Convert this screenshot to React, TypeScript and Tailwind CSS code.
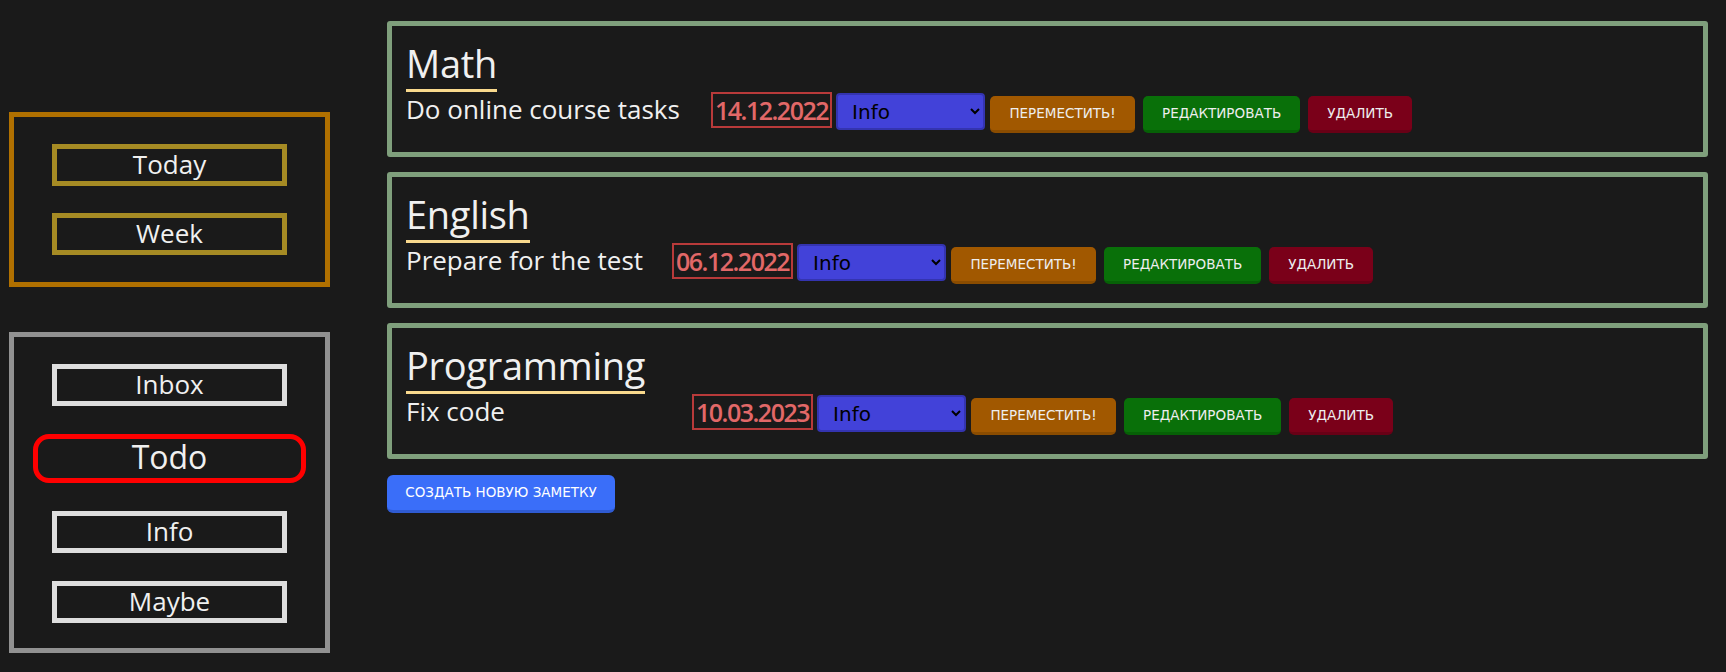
import React from "react";

const notes = [
  { title: "Math", text: "Do online course tasks", date: "14.12.2022", descW: "w-[305px]" },
  { title: "English", text: "Prepare for the test", date: "06.12.2022", descW: "w-[266px]" },
  { title: "Programming", text: "Fix code", date: "10.03.2023", descW: "w-[286px]" },
];

const sans = "font-['Open_Sans',sans-serif]";
const btnFont = "font-['DejaVu_Sans',sans-serif]";

function SideButton({ label, color }: { label: string; color: string }) {
  return (
    <div
      className={`w-[235px] h-[42px] border-[5px] ${color} flex items-center justify-center pb-[3px] text-[26px] leading-none`}
    >
      {label}
    </div>
  );
}

function NoteCard({ note }: { note: (typeof notes)[number] }) {
  return (
    <div className="border-[5px] border-[#7f9f7c] rounded-[3px] pl-[14px] pt-[12px] pb-[19px]">
      <h2 className="inline-block text-[38px] leading-[50px] pb-[1px] border-b-[3px] border-[#f9d98d] tracking-[-0.3px]">
        {note.title}
      </h2>
      <div className="flex items-start">
        <p className={`${note.descW} text-[26px] leading-[30px] mt-[2px] shrink-0`}>{note.text}</p>
        <span className="h-[36px] border-2 border-[#b83a3a] px-[2px] text-[#e26868] text-[25px] font-semibold tracking-[-1.5px] leading-[32px]">
          {note.date}
        </span>
        <select
          defaultValue="Info"
          className="ml-[4px] mt-[1px] w-[149px] h-[37px] bg-[#4242d9] border-2 border-[#3434b0] rounded-[4px] pl-[10px] text-black text-[20px] font-['DejaVu_Sans',sans-serif]"
        >
          <option>Inbox</option>
          <option>Todo</option>
          <option>Info</option>
          <option>Maybe</option>
        </select>
        <button
          className={`${btnFont} ml-[5px] mt-[4px] w-[145px] h-[37px] rounded-[5px] bg-[#a15800] border-b-[3px] border-[#8a4c00] text-[13.5px] text-[#eee]`}
        >
          ПЕРЕМЕСТИТЬ!
        </button>
        <button
          className={`${btnFont} ml-[8px] mt-[4px] w-[157px] h-[37px] rounded-[5px] bg-[#097009] border-b-[3px] border-[#066006] text-[13.5px] text-[#eee]`}
        >
          РЕДАКТИРОВАТЬ
        </button>
        <button
          className={`${btnFont} ml-[8px] mt-[4px] w-[104px] h-[37px] rounded-[5px] bg-[#7a0019] border-b-[3px] border-[#680016] text-[13.5px] text-[#eee]`}
        >
          УДАЛИТЬ
        </button>
      </div>
    </div>
  );
}

export default function App() {
  return (
    <div className={`${sans} min-h-[672px] bg-[#1a1a1a] text-[#f0f0f0] flex`}>
      {/* sidebar */}
      <aside className="ml-[9px] mt-[112px] w-[321px] flex flex-col gap-[45px] shrink-0">
        <div className="border-[5px] border-[#b07000] py-[27px] flex flex-col items-center gap-[27px]">
          <SideButton label="Today" color="border-[#a68b24]" />
          <SideButton label="Week" color="border-[#a68b24]" />
        </div>
        <div className="border-[5px] border-[#919191] pt-[27px] pb-[25px] flex flex-col items-center gap-[28px]">
          <SideButton label="Inbox" color="border-[#dedede]" />
          <div className="w-[273px] h-[49px] border-[5px] border-[#ff0000] rounded-[16px] flex items-center justify-center pb-[3px] text-[32px] leading-none">
            Todo
          </div>
          <SideButton label="Info" color="border-[#dedede]" />
          <SideButton label="Maybe" color="border-[#dedede]" />
        </div>
      </aside>

      {/* notes */}
      <main className="flex-1 ml-[57px] mr-[18px] mt-[21px] flex flex-col items-start">
        <div className="w-full flex flex-col gap-[15px]">
          {notes.map((n) => (
            <NoteCard key={n.title} note={n} />
          ))}
        </div>
        <button
          className={`${btnFont} mt-[16px] w-[228px] h-[38px] rounded-[6px] bg-[#3a6ef9] border-b-[3px] border-[#2f5bd2] text-[13.5px] text-white`}
        >
          СОЗДАТЬ НОВУЮ ЗАМЕТКУ
        </button>
      </main>
    </div>
  );
}
